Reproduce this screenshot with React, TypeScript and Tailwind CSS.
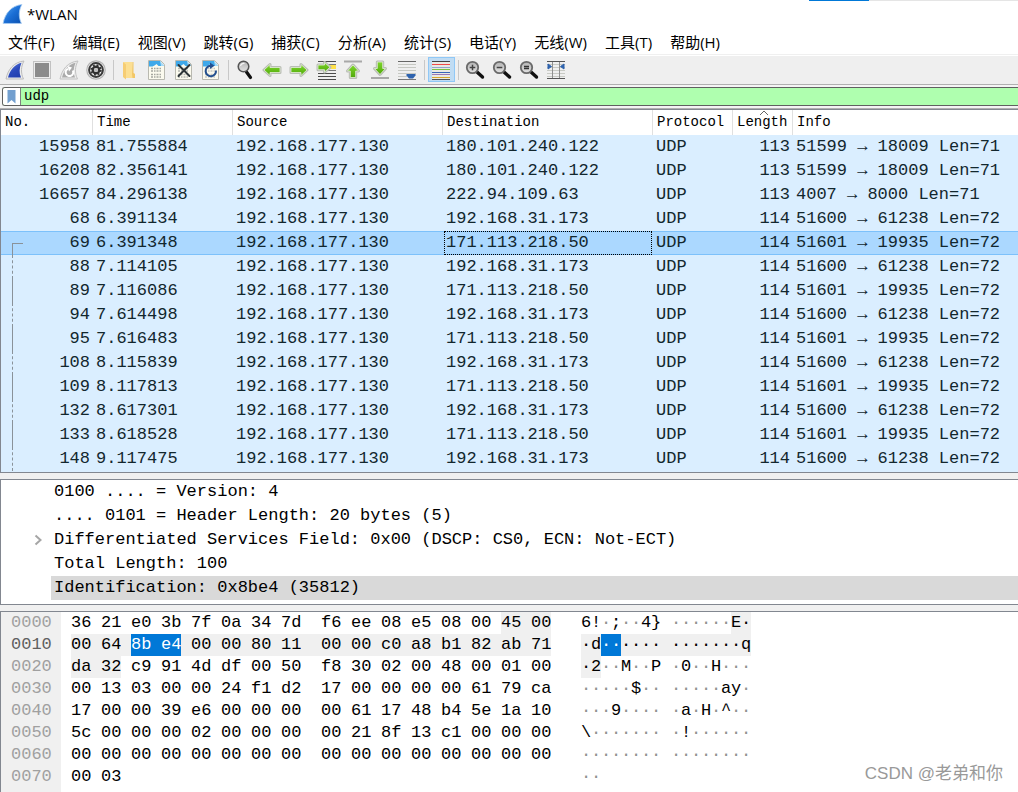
import React from "react";

const MONO = "font-['Liberation_Mono',monospace]";
const UI = "font-['Open_Sans','Noto_Sans_CJK_SC',sans-serif]";

const menus = ["文件(F)", "编辑(E)", "视图(V)", "跳转(G)", "捕获(C)", "分析(A)", "统计(S)", "电话(Y)", "无线(W)", "工具(T)", "帮助(H)"];

type Packet = {
  no: number;
  time: string;
  dst: string;
  len: number;
  info: string;
  link?: "start" | "solid" | "dashed";
};

const SRC = "192.168.177.130";

const packets: Packet[] = [
  { no: 15958, time: "81.755884", dst: "180.101.240.122", len: 113, info: "51599 → 18009 Len=71" },
  { no: 16208, time: "82.356141", dst: "180.101.240.122", len: 113, info: "51599 → 18009 Len=71" },
  { no: 16657, time: "84.296138", dst: "222.94.109.63", len: 113, info: "4007 → 8000 Len=71" },
  { no: 68, time: "6.391134", dst: "192.168.31.173", len: 114, info: "51600 → 61238 Len=72" },
  { no: 69, time: "6.391348", dst: "171.113.218.50", len: 114, info: "51601 → 19935 Len=72", link: "start" },
  { no: 88, time: "7.114105", dst: "192.168.31.173", len: 114, info: "51600 → 61238 Len=72", link: "dashed" },
  { no: 89, time: "7.116086", dst: "171.113.218.50", len: 114, info: "51601 → 19935 Len=72", link: "solid" },
  { no: 94, time: "7.614498", dst: "192.168.31.173", len: 114, info: "51600 → 61238 Len=72", link: "dashed" },
  { no: 95, time: "7.616483", dst: "171.113.218.50", len: 114, info: "51601 → 19935 Len=72", link: "solid" },
  { no: 108, time: "8.115839", dst: "192.168.31.173", len: 114, info: "51600 → 61238 Len=72", link: "dashed" },
  { no: 109, time: "8.117813", dst: "171.113.218.50", len: 114, info: "51601 → 19935 Len=72", link: "solid" },
  { no: 132, time: "8.617301", dst: "192.168.31.173", len: 114, info: "51600 → 61238 Len=72", link: "dashed" },
  { no: 133, time: "8.618528", dst: "171.113.218.50", len: 114, info: "51601 → 19935 Len=72", link: "solid" },
  { no: 148, time: "9.117475", dst: "192.168.31.173", len: 114, info: "51600 → 61238 Len=72", link: "dashed" },
];

// The IP header covers bytes 14 to 33; the identification field is bytes 18 and 19.
const FIELD_START = 14;
const FIELD_END = 33;
const SEL_START = 18;
const SEL_END = 19;

type HexLine = { offset: string; bytes: string; ascii: string };

const hexLines: HexLine[] = [
  { offset: "0000", bytes: "36 21 e0 3b 7f 0a 34 7d f6 ee 08 e5 08 00 45 00", ascii: "6!·;··4}······E·" },
  { offset: "0010", bytes: "00 64 8b e4 00 00 80 11 00 00 c0 a8 b1 82 ab 71", ascii: "·d·············q" },
  { offset: "0020", bytes: "da 32 c9 91 4d df 00 50 f8 30 02 00 48 00 01 00", ascii: "·2··M··P·0··H···" },
  { offset: "0030", bytes: "00 13 03 00 00 24 f1 d2 17 00 00 00 00 61 79 ca", ascii: "·····$·······ay·" },
  { offset: "0040", bytes: "17 00 00 39 e6 00 00 00 00 61 17 48 b4 5e 1a 10", ascii: "···9·····a·H·^··" },
  { offset: "0050", bytes: "5c 00 00 00 02 00 00 00 00 21 8f 13 c1 00 00 00", ascii: "\\········!······" },
  { offset: "0060", bytes: "00 00 00 00 00 00 00 00 00 00 00 00 00 00 00 00", ascii: "················" },
  { offset: "0070", bytes: "00 03", ascii: "··" },
];

type Mark = "plain" | "field" | "selected";

function markOf(index: number): Mark {
  if (index >= SEL_START && index <= SEL_END) return "selected";
  if (index >= FIELD_START && index <= FIELD_END) return "field";
  return "plain";
}

const markClass: Record<Mark, string> = {
  plain: "",
  field: "bg-[#f0f0f0]",
  selected: "bg-[#0078d7] text-white",
};

// The space after a byte takes the mark that both of its neighbours share.
function gapMark(line: number, col: number): Mark {
  if (col === 15) return "plain";
  const a = markOf(line * 16 + col);
  const b = markOf(line * 16 + col + 1);
  if (a === "plain" || b === "plain") return "plain";
  return a === "selected" && b === "selected" ? "selected" : "field";
}

function ByteRow({ line, bytes }: { line: number; bytes: string }) {
  return (
    <span className="flex">
      {bytes.split(" ").map((b, col) => (
        <React.Fragment key={col}>
          <span className={`w-5 ${markClass[markOf(line * 16 + col)]}`}>{b}</span>
          {col < 15 && <span className={`${col === 7 ? "w-5" : "w-[10px]"} ${markClass[gapMark(line, col)]}`}> </span>}
        </React.Fragment>
      ))}
    </span>
  );
}

function AsciiRow({ line, ascii }: { line: number; ascii: string }) {
  return (
    <span className="flex">
      {[...ascii].map((c, col) => {
        const mark = markOf(line * 16 + col);
        const dim = c === "·" && mark === "plain" ? "text-[#909090]" : "";
        return (
          <React.Fragment key={col}>
            {col === 8 && <span className={`w-[10px] ${markClass[gapMark(line, 7)]}`}> </span>}
            <span className={`w-[10px] ${markClass[mark]} ${dim}`}>{c}</span>
          </React.Fragment>
        );
      })}
    </span>
  );
}

function Icon({ children }: { children: React.ReactNode }) {
  return (
    <svg width="20" height="20" viewBox="0 0 20 20" aria-hidden="true">
      {children}
    </svg>
  );
}

const FIN = "M1 19 C3 9 9 2 19 1 C16 6 15.500 13 18.500 19 Z";
const FIN_INNER = "M3 17.500 C5 10 9.500 4.500 16.500 2.700 C14.200 8 14 13 16 17.500 Z";

function Defs() {
  return (
    <svg className="absolute" width="0" height="0" aria-hidden="true">
      <defs>
        <linearGradient id="finBlue" x1="0" y1="0" x2="1" y2="1">
          <stop offset="0" stopColor="#5aa8f0" />
          <stop offset="0.5" stopColor="#1b6fd6" />
          <stop offset="1" stopColor="#0a4fae" />
        </linearGradient>
        <linearGradient id="finStart" x1="0" y1="0" x2="0.600" y2="1">
          <stop offset="0" stopColor="#6a86e0" />
          <stop offset="0.6" stopColor="#2a49bc" />
          <stop offset="1" stopColor="#2340b0" />
        </linearGradient>
        <linearGradient id="green" x1="0" y1="0" x2="0" y2="1">
          <stop offset="0" stopColor="#7fd62b" />
          <stop offset="1" stopColor="#4fa80a" />
        </linearGradient>
        <linearGradient id="lens" x1="0" y1="0" x2="0" y2="1">
          <stop offset="0" stopColor="#b2b2b2" />
          <stop offset="1" stopColor="#e4e4e4" />
        </linearGradient>
      </defs>
    </svg>
  );
}

function PageBase({ dots }: { dots: string }) {
  return (
    <>
      <path d="M1.500 0.500 H13.500 L17.500 4.500 V19.500 H1.500 Z" fill="#fbfaee" stroke="#b9b9b0" />
      <path d="M2 1 H13 L14 2 V6 H11.500 L9.500 4 L7.500 5.500 L5.500 6.500 H2 Z" fill="#3fa9ea" />
      <path d="M13 1 L17 5 V6 H14 Z" fill="#a8daf6" />
      <path d="M4 8.500 H15 M4 11 H15 M4 14.500 H15 M4 17 H15" stroke={dots} strokeWidth="1.500" strokeDasharray="2 1 1.500 1" />
    </>
  );
}

function Magnifier({ sign }: { sign: "+" | "-" | "=" }) {
  return (
    <Icon>
      <path d="M12 12 L17.500 17" stroke="#111" strokeWidth="3.400" strokeLinecap="round" />
      <circle cx="7.500" cy="7.500" r="5.700" fill="url(#lens)" stroke="#6a6a6a" strokeWidth="1.800" />
      {sign === "=" ? (
        <path d="M5 6.500 H10 M5 8.500 H10" stroke="#333" strokeWidth="1.300" />
      ) : (
        <path d="M4.700 7.500 H10.300" stroke="#444" strokeWidth="1.500" />
      )}
      {sign === "+" && <path d="M7.500 4.700 V10.300" stroke="#444" strokeWidth="1.500" />}
    </Icon>
  );
}

function GreenArrow({ d }: { d: string }) {
  return (
    <>
      <path d={d} fill="#c4c8c0" stroke="#b9bdb5" strokeWidth="3" strokeLinejoin="round" />
      <path d={d} fill="url(#green)" stroke="#e4eedb" strokeWidth="0.800" />
    </>
  );
}

const ARROW = "M2 10 L8 4.500 V7.500 H18 V12.500 H8 V15.500 Z";

type Tool = { label: string; icon: React.ReactNode; checked?: boolean };

const tools: (Tool | null)[] = [
  {
    label: "Start capture",
    icon: (
      <Icon>
        <path d={FIN} fill="#ececec" stroke="#bcbcbc" strokeWidth="1" />
        <path d={FIN_INNER} fill="url(#finStart)" />
      </Icon>
    ),
  },
  {
    label: "Stop capture",
    icon: (
      <Icon>
        <rect x="1.500" y="1.500" width="17" height="17" fill="#ececec" stroke="#c2c2c2" />
        <rect x="3" y="3" width="14" height="14" fill="#8b8b8b" />
      </Icon>
    ),
  },
  {
    label: "Restart capture",
    icon: (
      <Icon>
        <path d={FIN} fill="#ececec" stroke="#c2c2c2" strokeWidth="1" />
        <path d={FIN_INNER} fill="#ababab" />
        <path d="M13.800 10.500 A3.800 3.800 0 1 1 9 8.800" fill="none" stroke="#fff" strokeWidth="2" />
        <path d="M8.500 6 L13 7.500 L10 11.500 Z" fill="#fff" />
      </Icon>
    ),
  },
  {
    label: "Capture options",
    icon: (
      <Icon>
        <circle cx="10" cy="10" r="9.200" fill="#f4f4f4" stroke="#b4b4b4" strokeWidth="1.200" />
        <circle cx="10" cy="10" r="6.900" fill="none" stroke="#3a3a3a" strokeWidth="2" />
        <circle cx="10" cy="10" r="3.300" fill="none" stroke="#303030" strokeWidth="2.400" />
        <circle cx="10" cy="10" r="4.900" fill="none" stroke="#303030" strokeWidth="1.600" strokeDasharray="1.900 1.950" />
        <circle cx="10" cy="10" r="2.100" fill="#bdbdbd" />
      </Icon>
    ),
  },
  null,
  {
    label: "Open",
    icon: (
      <Icon>
        <path d="M3.500 2 H12.500 V13 L15 14 V18 H5 L3.500 17 Z" fill="#fcdf92" />
        <path d="M3 2 L6 4.500 V19.500 L3 17 Z" fill="#f6cd74" />
        <path d="M12.500 2 H13.500 V13 L15 14 V18 H12.500 L12 14 Z" fill="#f2c766" />
      </Icon>
    ),
  },
  {
    label: "Save",
    icon: (
      <Icon>
        <PageBase dots="#a5a7a0" />
      </Icon>
    ),
  },
  {
    label: "Close",
    icon: (
      <Icon>
        <PageBase dots="#b4b6b0" />
        <path d="M4.500 5 L15.500 16 M15.500 5 L4.500 16" stroke="#2c3438" strokeWidth="2" strokeLinecap="round" />
      </Icon>
    ),
  },
  {
    label: "Reload",
    icon: (
      <Icon>
        <PageBase dots="#c6c8c2" />
        <path d="M15 10.500 A5.200 5.200 0 1 1 9.500 5.800" fill="none" stroke="#24508e" strokeWidth="2" />
        <path d="M9 2.500 L13.500 5.800 L9 9 Z" fill="#24508e" />
      </Icon>
    ),
  },
  null,
  {
    label: "Find packet",
    icon: (
      <Icon>
        <path d="M11.500 12 L15.500 17.500" stroke="#111" strokeWidth="3.200" strokeLinecap="round" />
        <circle cx="8.500" cy="6.500" r="5.300" fill="url(#lens)" stroke="#555" strokeWidth="1.500" />
        <path d="M5.500 6 A3.200 3.200 0 0 1 9.500 3.500" fill="none" stroke="#f5f5f5" strokeWidth="1.200" />
      </Icon>
    ),
  },
  {
    label: "Previous packet",
    icon: (
      <Icon>
        <GreenArrow d={ARROW} />
      </Icon>
    ),
  },
  {
    label: "Next packet",
    icon: (
      <Icon>
        <g transform="translate(20 0) scale(-1 1)">
          <GreenArrow d={ARROW} />
        </g>
      </Icon>
    ),
  },
  {
    label: "Go to packet",
    icon: (
      <Icon>
        <path d="M2 1.500 H20 M2 13.500 H20 M2 16.500 H20 M2 19.500 H20" stroke="#4c4c4c" />
        <path d="M11 4.500 H20 M11 10.500 H20" stroke="#777" />
        <rect x="14" y="5" width="6" height="4" fill="#ffe14a" />
        <GreenArrow d="M2 5 H8.500 V2.500 L14 7.300 L8.500 12 V9.700 H2 Z" />
      </Icon>
    ),
  },
  {
    label: "First packet",
    icon: (
      <Icon>
        <path d="M1 1.500 H19" stroke="#a8a8a8" strokeWidth="2" />
        <GreenArrow d="M10 5 L15.500 11 H12.700 V17.500 H7.300 V11 H4.500 Z" />
      </Icon>
    ),
  },
  {
    label: "Last packet",
    icon: (
      <Icon>
        <path d="M1 18 H19" stroke="#a8a8a8" strokeWidth="2" />
        <GreenArrow d="M10 14.500 L15.500 8.500 H12.700 V2 H7.300 V8.500 H4.500 Z" />
      </Icon>
    ),
  },
  {
    label: "Auto scroll",
    icon: (
      <Icon>
        <path d="M1 1.500 H19" stroke="#666" />
        <path d="M1 4.500 H19 M1 7.500 H19 M1 10.500 H19 M1 13.500 H19 M1 16.500 H10" stroke="#c6c8c2" />
        <path d="M1 19.500 H19" stroke="#777" />
        <path d="M9.500 14 H18.500 V15.500 L16 18.500 H12 L9.500 15.500 Z" fill="#2f63ae" />
      </Icon>
    ),
  },
  null,
  {
    label: "Colorize",
    checked: true,
    icon: (
      <Icon>
        <rect x="1" y="1" width="18" height="19" fill="#e9e9e4" />
        <path d="M1 1.500 H19" stroke="#444" />
        <path d="M1 4.500 H19" stroke="#ef4a4a" />
        <path d="M1 7.500 H19" stroke="#8fa6cc" />
        <path d="M1 9.500 H19" stroke="#7cc243" />
        <path d="M1 12.500 H19" stroke="#3a66b8" />
        <path d="M1 14.500 H19" stroke="#9a78b8" />
        <path d="M1 17.500 H19" stroke="#d8a62c" />
        <path d="M1 19.500 H19" stroke="#555" />
      </Icon>
    ),
  },
  null,
  { label: "Zoom in", icon: <Magnifier sign="+" /> },
  { label: "Zoom out", icon: <Magnifier sign="-" /> },
  { label: "Normal size", icon: <Magnifier sign="=" /> },
  {
    label: "Resize columns",
    icon: (
      <Icon>
        <path d="M1 4.500 H19 M1 7.500 H19 M1 10.500 H19 M1 13.500 H19 M1 16.500 H19" stroke="#c8cac4" />
        <path d="M1 1.500 H19 M1 18.500 H19" stroke="#555" />
        <path d="M6.500 2 V18 M13.500 2 V18" stroke="#909090" />
        <path d="M2 4 L5.500 6.500 L2 9 Z M18 4 L14.500 6.500 L18 9 Z" fill="#2f63ae" stroke="#2f63ae" />
      </Icon>
    ),
  },
];

const headers = ["No.", "Time", "Source", "Destination", "Protocol", "Length", "Info"];

function StreamLine({ kind }: { kind: NonNullable<Packet["link"]> }) {
  if (kind === "start")
    return <span className="absolute -bottom-px left-[11px] h-3 w-[11px] border-t border-l border-[#8a9299]" />;
  if (kind === "solid") return <span className="absolute inset-y-0 left-[11px] border-l border-[#8a9299]" />;
  return <span className="absolute inset-y-0 left-[11px] border-l border-dashed border-[#8a9299]" />;
}

function PacketTable() {
  return (
    <div className="overflow-hidden border-y border-l border-[#828790] bg-[#daeeff] pb-px">
      <table className="w-full table-fixed border-separate border-spacing-0">
        <colgroup>
          <col className="w-[92px]" />
          <col className="w-[140px]" />
          <col className="w-[210px]" />
          <col className="w-[210px]" />
          <col className="w-20" />
          <col className="w-[60px]" />
          <col />
        </colgroup>
        <thead>
          <tr className="h-[25px] bg-white text-[14px] leading-[25px] text-black">
            {headers.map((h) => (
              <th
                key={h}
                scope="col"
                className="relative border-r border-[#e0e0e0] p-0 pl-1 text-left font-normal whitespace-nowrap last:border-r-0"
              >
                {h}
                {h === "Length" && (
                  <svg className="absolute top-0 left-[26px]" width="10" height="6" viewBox="0 0 10 6" aria-hidden="true">
                    <path d="M1 5 L5 1 L9 5" fill="none" stroke="#666" />
                  </svg>
                )}
              </th>
            ))}
          </tr>
        </thead>
        <tbody className="text-[17px] text-[#12272e]">
          {packets.map((p) => {
            const sel = p.link === "start";
            const cell = sel
              ? "relative h-6 border-y border-[#7cc1fb] bg-[#abd8ff] p-0 pl-[3px] leading-[22px] whitespace-nowrap"
              : "relative h-6 bg-[#daeeff] p-0 pl-[3px] leading-6 whitespace-nowrap";
            return (
              <tr key={p.no}>
                <td className={`${cell} pr-[3px] text-right`}>
                  {p.link && <StreamLine kind={p.link} />}
                  {p.no}
                </td>
                <td className={cell}>{p.time}</td>
                <td className={cell}>{SRC}</td>
                <td className={cell}>
                  {p.dst}
                  {sel && <span className="absolute -inset-y-px right-px left-px border border-dotted border-black" />}
                </td>
                <td className={cell}>UDP</td>
                <td className={`${cell} pr-[3px] text-right`}>{p.len}</td>
                <td className={cell}>{p.info}</td>
              </tr>
            );
          })}
        </tbody>
      </table>
    </div>
  );
}

const details = [
  { text: "0100 .... = Version: 4" },
  { text: ".... 0101 = Header Length: 20 bytes (5)" },
  { text: "Differentiated Services Field: 0x00 (DSCP: CS0, ECN: Not-ECT)", expandable: true },
  { text: "Total Length: 100" },
  { text: "Identification: 0x8be4 (35812)", selected: true },
];

export default function App() {
  return (
    <div className={`relative flex min-h-screen flex-col overflow-hidden bg-white text-black ${MONO}`}>
      <Defs />
      <div className="absolute top-0 right-0 flex h-px">
        <span className="w-[60px] bg-[#0078d7]" />
        <span className="w-[149px] bg-[#e5e5e5]" />
      </div>

      <header className={`flex h-[30px] items-center gap-1 pb-[2px] pl-[2px] ${UI}`}>
        <svg width="21" height="22" viewBox="0 0 20 20" aria-hidden="true">
          <path d={FIN} fill="url(#finBlue)" stroke="#a9cdf2" strokeWidth="0.8" />
        </svg>
        <h1 className="text-[15px] leading-5">*WLAN</h1>
      </header>

      <nav className={`flex h-6 items-center gap-[18px] pl-2 text-[15px] ${UI}`}>
        {menus.map((m) => (
          <button key={m} type="button" className="leading-6 whitespace-nowrap">
            {m}
          </button>
        ))}
      </nav>

      <div className="border-t border-[#f0f0f0] bg-white pt-px">
        <div role="toolbar" aria-label="Main" className="flex h-7 items-start bg-[#efefef] pt-px pl-[2px]">
          {tools.map((t, i) =>
            t ? (
              <button
                key={i}
                type="button"
                aria-label={t.label}
                aria-pressed={t.checked}
                className={
                  t.checked
                    ? "flex h-[25px] w-[27px] items-start border border-[#90c8f6] bg-[#c0dcf3] pt-[2px] pl-[2px]"
                    : "flex h-[25px] w-[27px] items-start pt-[3px] pl-[3px]"
                }
              >
                {t.icon}
              </button>
            ) : (
              <span key={i} className="flex w-[7px] justify-center pt-[3px]">
                <span className="h-5 w-px bg-[#c8c8c8]" />
              </span>
            ),
          )}
        </div>
      </div>

      <div className="border-y border-[#b0b0b0] bg-[#f4f4f4] py-[2px] pl-[2px]">
        <div className="flex h-[19px] rounded-l-[3px] border-y border-l border-[#606060] bg-[#afffaf]">
          <button
            type="button"
            aria-label="Bookmarks"
            className="flex w-[18px] items-center justify-center rounded-l-[2px] border-r border-[#808080] bg-white"
          >
            <svg width="9" height="14" viewBox="0 0 9 14" aria-hidden="true">
              <path d="M0.500 0 H8.500 V13.500 L4.500 10 L0.500 13.500 Z" fill="#729fcf" />
            </svg>
          </button>
          <input
            aria-label="Display filter"
            defaultValue="udp"
            spellCheck={false}
            className="min-w-0 flex-1 bg-transparent px-[3px] text-[14px] leading-[17px] outline-none"
          />
        </div>
      </div>

      <main className="flex flex-1 flex-col gap-[6px] bg-[#f0f0f0]">
        <PacketTable />

        <ul className="border-y border-l border-[#828790] bg-white pb-1 text-[17px] leading-6">
          {details.map((d) => (
            <li key={d.text} className="flex items-center">
              <span className="flex w-[50px] justify-center pl-6">
                {d.expandable && (
                  <svg width="9" height="12" viewBox="0 0 9 12" aria-hidden="true">
                    <path d="M1.500 1.500 L6.500 6 L1.500 10.500" fill="none" stroke="#a6a6a6" strokeWidth="2" />
                  </svg>
                )}
              </span>
              <span className={d.selected ? "flex-1 bg-[#d9d9d9] pl-[3px]" : "flex-1 pl-[3px]"}>{d.text}</span>
            </li>
          ))}
        </ul>

        <div className="flex flex-1 border-t border-l border-[#828790] bg-[linear-gradient(to_right,#f0f0f0_60px,#ffffff_60px)]">
          <table className="h-fit text-[17px] leading-[22px]">
            <tbody>
              {hexLines.map((l, i) => (
                <tr key={l.offset}>
                  <th
                    scope="row"
                    className={
                      i === 1
                        ? "w-[60px] p-0 pl-[10px] text-left font-normal text-[#606060]"
                        : "w-[60px] p-0 pl-[10px] text-left font-normal text-[#a0a0a0]"
                    }
                  >
                    {l.offset}
                  </th>
                  <td className="p-0 pl-[10px]">
                    <ByteRow line={i} bytes={l.bytes} />
                  </td>
                  <td className="p-0 pl-[30px]">
                    <AsciiRow line={i} ascii={l.ascii} />
                  </td>
                </tr>
              ))}
            </tbody>
          </table>
        </div>
      </main>

      <p className="absolute right-[15px] bottom-[6px] font-['Liberation_Sans','Noto_Sans_CJK_SC',sans-serif] text-[17px] leading-6 text-[#999999]">
        CSDN @老弟和你
      </p>
    </div>
  );
}
